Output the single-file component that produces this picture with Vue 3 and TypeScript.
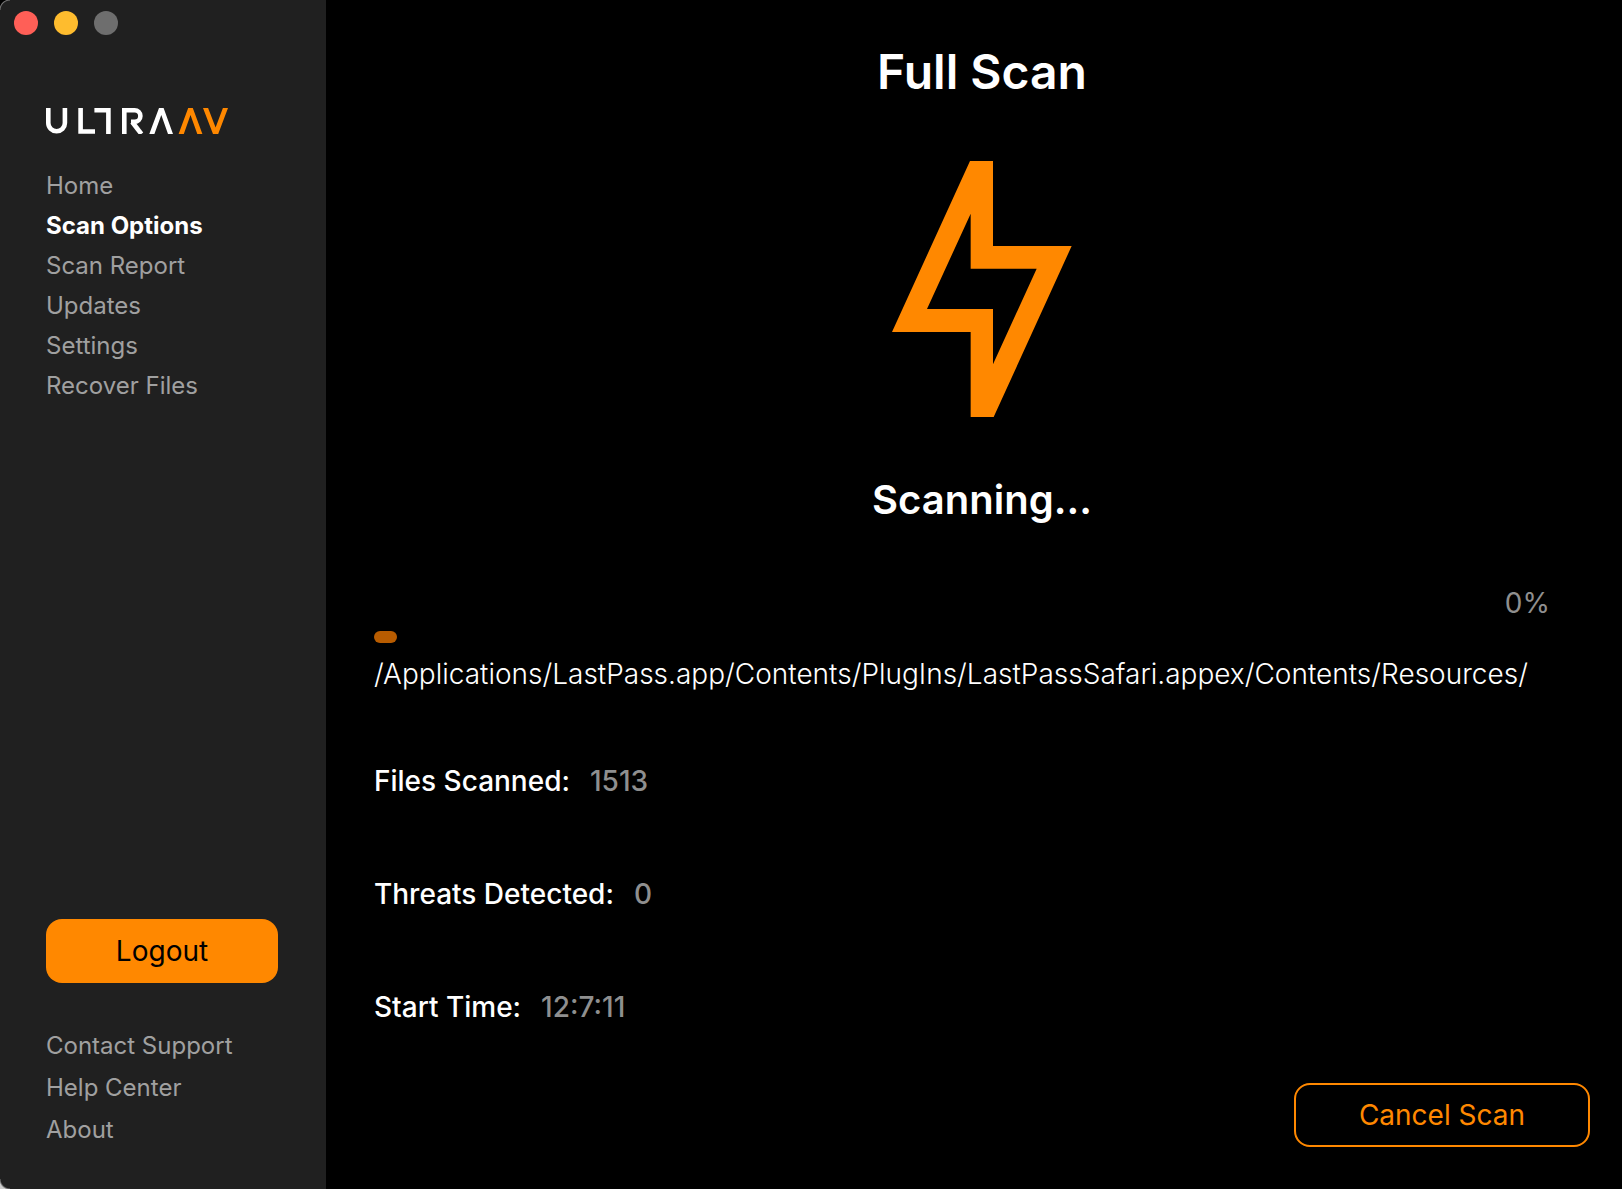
<script setup lang="ts">
interface Stat {
  label: string
  value: string
}

const navItems: string[] = ['Home', 'Scan Options', 'Scan Report', 'Updates', 'Settings', 'Recover Files']
const activeItem = 'Scan Options'
const footerLinks: string[] = ['Contact Support', 'Help Center', 'About']
const progress = 0
const currentPath = '/Applications/LastPass.app/Contents/PlugIns/LastPassSafari.appex/Contents/Resources/'
const stats: Stat[] = [
  { label: 'Files Scanned:', value: '1513' },
  { label: 'Threats Detected:', value: '0' },
  { label: 'Start Time:', value: '12:7:11' },
]
</script>

<template>
  <div class="window">
    <aside class="sidebar">
      <div class="lights">
        <button class="light close" aria-label="Close"></button>
        <button class="light minimize" aria-label="Minimize"></button>
        <button class="light zoom" aria-label="Zoom" disabled></button>
      </div>
      <svg class="logo" viewBox="0 0 182 26" role="img" aria-label="UltraAV">
        <g fill="none" stroke="#fff" stroke-width="4.6">
          <path d="M2.3 0V15a8.3 8.3 0 0 0 16.6 0V0" />
          <path d="M34.6 0V23.5H49" />
          <path d="M48.4 2.3H62.4V26" />
          <path d="M78.3 26V2.3H88.6a5.8 5.8 0 0 1 0 11.6H85" />
          <path d="M86.2 14L95.4 26" />
        </g>
        <path fill="#fff" d="M103.3 26L113 0h4.6L127 26h-5L115.3 7 108.4 26z" />
        <path fill="#ff8800" d="M132.6 26L142.2 0h4.6L156.4 26h-5.1L144.5 7 137.8 26zM157 0h5.1L169.6 19.5 176.9 0H182L172.2 26h-5.2z" />
      </svg>
      <nav class="nav">
        <a v-for="item in navItems" :key="item" href="#" :class="{ active: item === activeItem }">{{ item }}</a>
      </nav>
      <button class="logout">Logout</button>
      <nav class="support">
        <a v-for="link in footerLinks" :key="link" href="#">{{ link }}</a>
      </nav>
    </aside>
    <main class="content">
      <h1>Full Scan</h1>
      <svg class="bolt" viewBox="0 0 540 768" aria-hidden="true">
        <path fill="#ff8800" fill-rule="evenodd" d="M234 0H303V255H539L305 768H236V513H0zM236 158V323H434L303 610V444H105z" />
      </svg>
      <h2>Scanning...</h2>
      <div class="percent">{{ progress }}%</div>
      <div class="track" role="progressbar" aria-label="Scan progress" :aria-valuenow="progress" aria-valuemin="0" aria-valuemax="100">
        <div class="fill" :style="{ width: progress + '%' }"></div>
      </div>
      <p class="path">{{ currentPath }}</p>
      <dl class="stats">
        <div v-for="stat in stats" :key="stat.label" class="stat">
          <dt>{{ stat.label }}</dt>
          <dd>{{ stat.value }}</dd>
        </div>
      </dl>
      <button class="cancel">Cancel Scan</button>
    </main>
  </div>
</template>

<style>
body {
  margin: 0;
  background: #000;
}
</style>

<style scoped>
.window {
  box-sizing: border-box;
  display: flex;
  min-height: 100vh;
  font-family: Inter, "Liberation Sans", sans-serif;
  color: #fff;
  background: #000;
}
button {
  font-family: inherit;
  cursor: pointer;
}
.sidebar {
  box-sizing: border-box;
  display: flex;
  flex-direction: column;
  flex: 0 0 326px;
  padding: 11px 48px 38px 46px;
  background:
    radial-gradient(circle at 100% 100%, transparent 9px, #777 10px, #000 11px) 0 0 / 10px 10px no-repeat,
    radial-gradient(circle at 100% 0, transparent 9px, #ccc 11px) 0 100% / 10px 10px no-repeat,
    #202020;
}
.lights {
  display: flex;
  gap: 16px;
  margin-left: -32px;
}
.light {
  width: 24px;
  height: 24px;
  padding: 0;
  border: 0;
  border-radius: 50%;
}
.close {
  background: #ff5f57;
}
.minimize {
  background: #febc2e;
}
.zoom {
  background: #6e6e6e;
}
.logo {
  width: 182px;
  height: 26px;
  margin-top: 73px;
}
.nav,
.support {
  display: flex;
  flex-direction: column;
  align-items: flex-start;
  font-size: 24px;
}
.nav {
  margin: 32px 0 auto;
  line-height: 40px;
}
.support {
  margin-top: 42px;
  line-height: 42px;
}
a {
  color: #a0a0a0;
  text-decoration: none;
}
a.active {
  color: #fff;
  font-weight: 700;
}
.logout,
.cancel {
  height: 64px;
  border-radius: 16px;
  font-size: 28px;
}
.logout {
  border: 0;
  color: #000;
  background: #ff8800;
}
.content {
  display: flex;
  flex-direction: column;
  flex: 1;
  min-width: 0;
  padding: 44px 32px 42px 48px;
}
h1,
h2,
p,
dl,
dd {
  margin: 0;
}
h1,
h2 {
  text-align: center;
  font-weight: 600;
}
h1 {
  font-size: 48px;
  line-height: 56px;
}
.bolt {
  align-self: center;
  width: 180px;
  height: 256px;
  margin: 61px 0 59px;
}
h2 {
  font-size: 40px;
  line-height: 48px;
}
.percent {
  margin: 63px 40px 12px 0;
  text-align: right;
  font-size: 28px;
  line-height: 32px;
  color: #8f8f8f;
}
.track {
  height: 12px;
  margin-right: 40px;
}
.fill {
  min-width: 23px;
  height: 12px;
  border-radius: 6px;
  background: #b85c00;
}
.path {
  margin-top: 11px;
  font-size: 28px;
  line-height: 40px;
  font-weight: 300;
  white-space: nowrap;
}
.stats {
  display: flex;
  flex-direction: column;
  gap: 81px;
  margin: 71px 0 40px;
  font-size: 28px;
  line-height: 32px;
}
.stat {
  display: flex;
  gap: 20px;
  font-weight: 500;
}
dd {
  color: #8f8f8f;
}
.cancel {
  align-self: flex-end;
  width: 296px;
  margin-top: auto;
  border: 2px solid #ff8800;
  color: #ff8800;
  background: transparent;
}
</style>
